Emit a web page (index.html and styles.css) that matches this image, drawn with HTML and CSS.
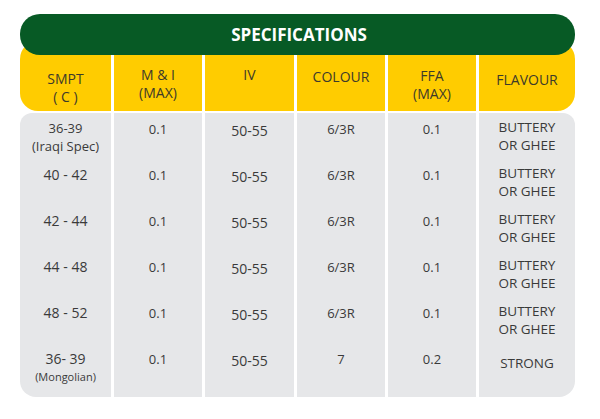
FILE: index.html
```html
<!DOCTYPE html>
<html>
<head>
<meta charset="utf-8">
<link rel="stylesheet" href="styles.css">
</head>
<body>
<div class="spec">
  <div class="title">SPECIFICATIONS</div>
  <div class="head">
    <div class="hc h1">SMPT<br>( C )</div>
    <div class="hc h2">M &amp; I<br>(MAX)</div>
    <div class="hc h3">IV</div>
    <div class="hc h4">COLOUR</div>
    <div class="hc h5">FFA<br>(MAX)</div>
    <div class="hc h6">FLAVOUR</div>
  </div>
  <div class="body">
    <div class="c first tl">36-39<br>(Iraqi Spec)</div>
    <div class="c">0.1</div>
    <div class="c iv">50-55</div>
    <div class="c">6/3R</div>
    <div class="c">0.1</div>
    <div class="c last tr">BUTTERY<br>OR GHEE</div>

    <div class="c first">40 - 42</div>
    <div class="c">0.1</div>
    <div class="c iv">50-55</div>
    <div class="c">6/3R</div>
    <div class="c">0.1</div>
    <div class="c last">BUTTERY<br>OR GHEE</div>

    <div class="c first">42 - 44</div>
    <div class="c">0.1</div>
    <div class="c iv">50-55</div>
    <div class="c">6/3R</div>
    <div class="c">0.1</div>
    <div class="c last">BUTTERY<br>OR GHEE</div>

    <div class="c first">44 - 48</div>
    <div class="c">0.1</div>
    <div class="c iv">50-55</div>
    <div class="c">6/3R</div>
    <div class="c">0.1</div>
    <div class="c last">BUTTERY<br>OR GHEE</div>

    <div class="c first">48 - 52</div>
    <div class="c">0.1</div>
    <div class="c iv">50-55</div>
    <div class="c">6/3R</div>
    <div class="c">0.1</div>
    <div class="c last">BUTTERY<br>OR GHEE</div>

    <div class="c first bl">36- 39<br><span class="small">(Mongolian)</span></div>
    <div class="c">0.1</div>
    <div class="c iv">50-55</div>
    <div class="c">7</div>
    <div class="c">0.2</div>
    <div class="c last br strong">STRONG</div>
  </div>
</div>
</body>
</html>
```

FILE: styles.css
```css
* { box-sizing: border-box; }
html, body { margin: 0; padding: 0; background: #ffffff; }
body {
  font-family: "Open Sans", "Noto Sans", sans-serif;
  color: #3a3a3a;
}
.spec {
  width: 555px;
  margin: 14px 0 0 20px;
}
.title {
  height: 41px;
  background: #075a25;
  border-radius: 20px;
  color: #ffffff;
  font-weight: 700;
  font-size: 17px;
  line-height: 41px;
  text-align: center;
  position: relative;
  z-index: 1;
  margin-bottom: -14px;
  padding-left: 3px;
}
.head {
  display: grid;
  grid-template-columns: 91px 88px 89px 88px 88px 96px;
  column-gap: 3px;
  height: 70px;
}
.hc {
  background: #ffcc00;
  text-align: center;
  font-size: 14px;
  line-height: 18px;
  color: #3d3a2a;
}
.h1 { padding-top: 29px; border-radius: 18px 0 0 18px; }
.h2 { padding-top: 25px; }
.h3 { padding-top: 25px; }
.h4 { padding-top: 27px; }
.h5 { padding-top: 26px; }
.h6 { padding-top: 30px; border-radius: 0 18px 18px 0; }
.body {
  margin-top: 2px;
  display: grid;
  grid-template-columns: 91px 88px 89px 88px 88px 96px;
  grid-template-rows: 46px 46px 46px 46px 46px 54px;
  column-gap: 3px;
}
.c {
  background: #e6e7e9;
  text-align: center;
  font-size: 13px;
  line-height: 16px;
  padding-top: 8px;
}
.iv { font-size: 14px; padding-top: 10px; }
.last { font-size: 13.5px; line-height: 17.5px; padding-top: 6px; }
.strong { padding-top: 12px; }
.tl { border-top-left-radius: 12px; }
.tr { border-top-right-radius: 12px; }
.bl { border-bottom-left-radius: 16px; }
.br { border-bottom-right-radius: 16px; }
.first { font-size: 14px; }
.first.tl { font-size: 13px; line-height: 17.5px; padding-top: 7px; }
.small { font-size: 11px; line-height: 19px; }
```
